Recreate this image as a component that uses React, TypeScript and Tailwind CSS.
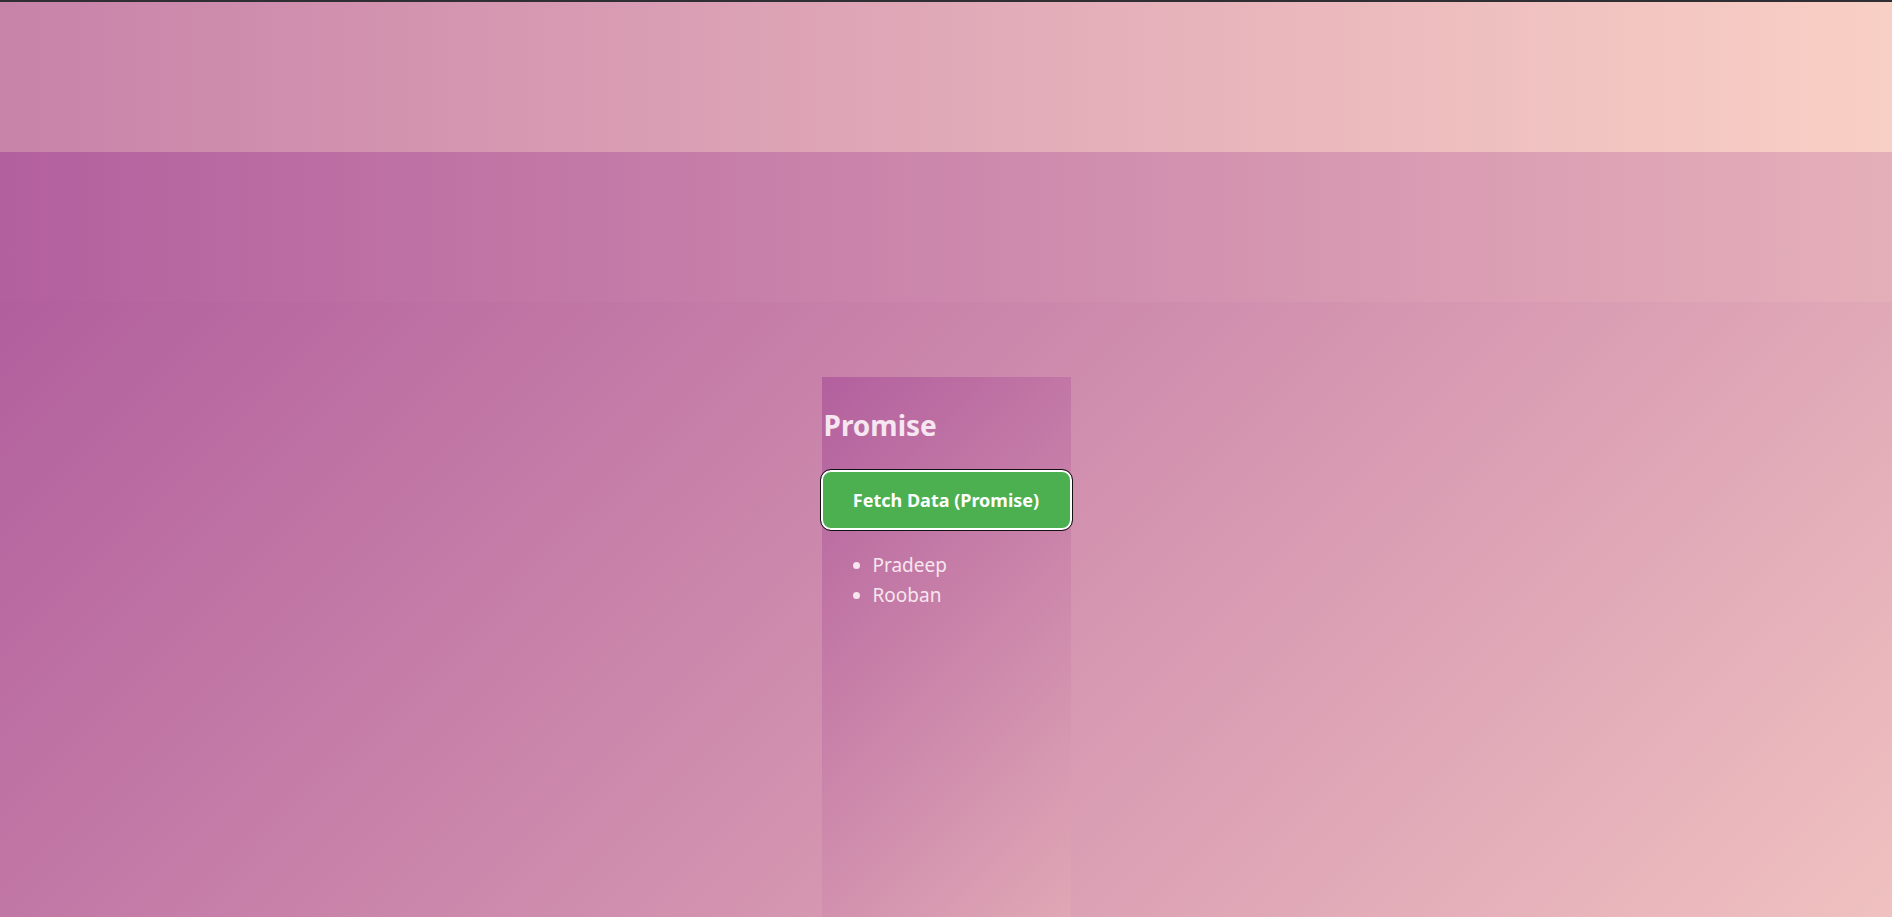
export default function App() {
  const users = ["Pradeep", "Rooban"];

  return (
    <div
      className="flex min-h-screen flex-col text-white"
      style={{ fontFamily: '"Noto Sans", "Open Sans", sans-serif' }}
    >
      {/* top edge */}
      <div className="h-[2px] bg-[#2f2e33]" />

      {/* light band */}
      <div className="h-[150px] bg-gradient-to-r from-[#c883a9] to-[#f9d0c5]" />

      {/* darker band */}
      <div className="h-[150px] bg-gradient-to-r from-[#b3609e] to-[#e5afb9]" />

      {/* page body */}
      <main className="flex flex-1 justify-center bg-[linear-gradient(135deg,#b25f9d,#f0c1c0)] pt-[75px]">
        <section className="flex w-[249px] flex-col bg-[linear-gradient(135deg,#b3609e,#e0a7b5)]">
          <h2 className="mt-[31px] pl-[2px] text-[28px] font-bold leading-[34px] text-[#f6e6f1]">
            Promise
          </h2>

          <button className="mt-[28px] h-[60px] w-[251px] -ml-[1px] rounded-[10px] border-2 border-white bg-[#4caf50] text-[18px] font-bold text-white outline outline-1 outline-[#111]">
            Fetch Data (Promise)
          </button>

          <ul className="mt-[20px] list-disc pl-[51px] text-[19px] leading-[30px] text-[#f7e6ef]">
            {users.map((name) => (
              <li key={name}>{name}</li>
            ))}
          </ul>
        </section>
      </main>
    </div>
  );
}
